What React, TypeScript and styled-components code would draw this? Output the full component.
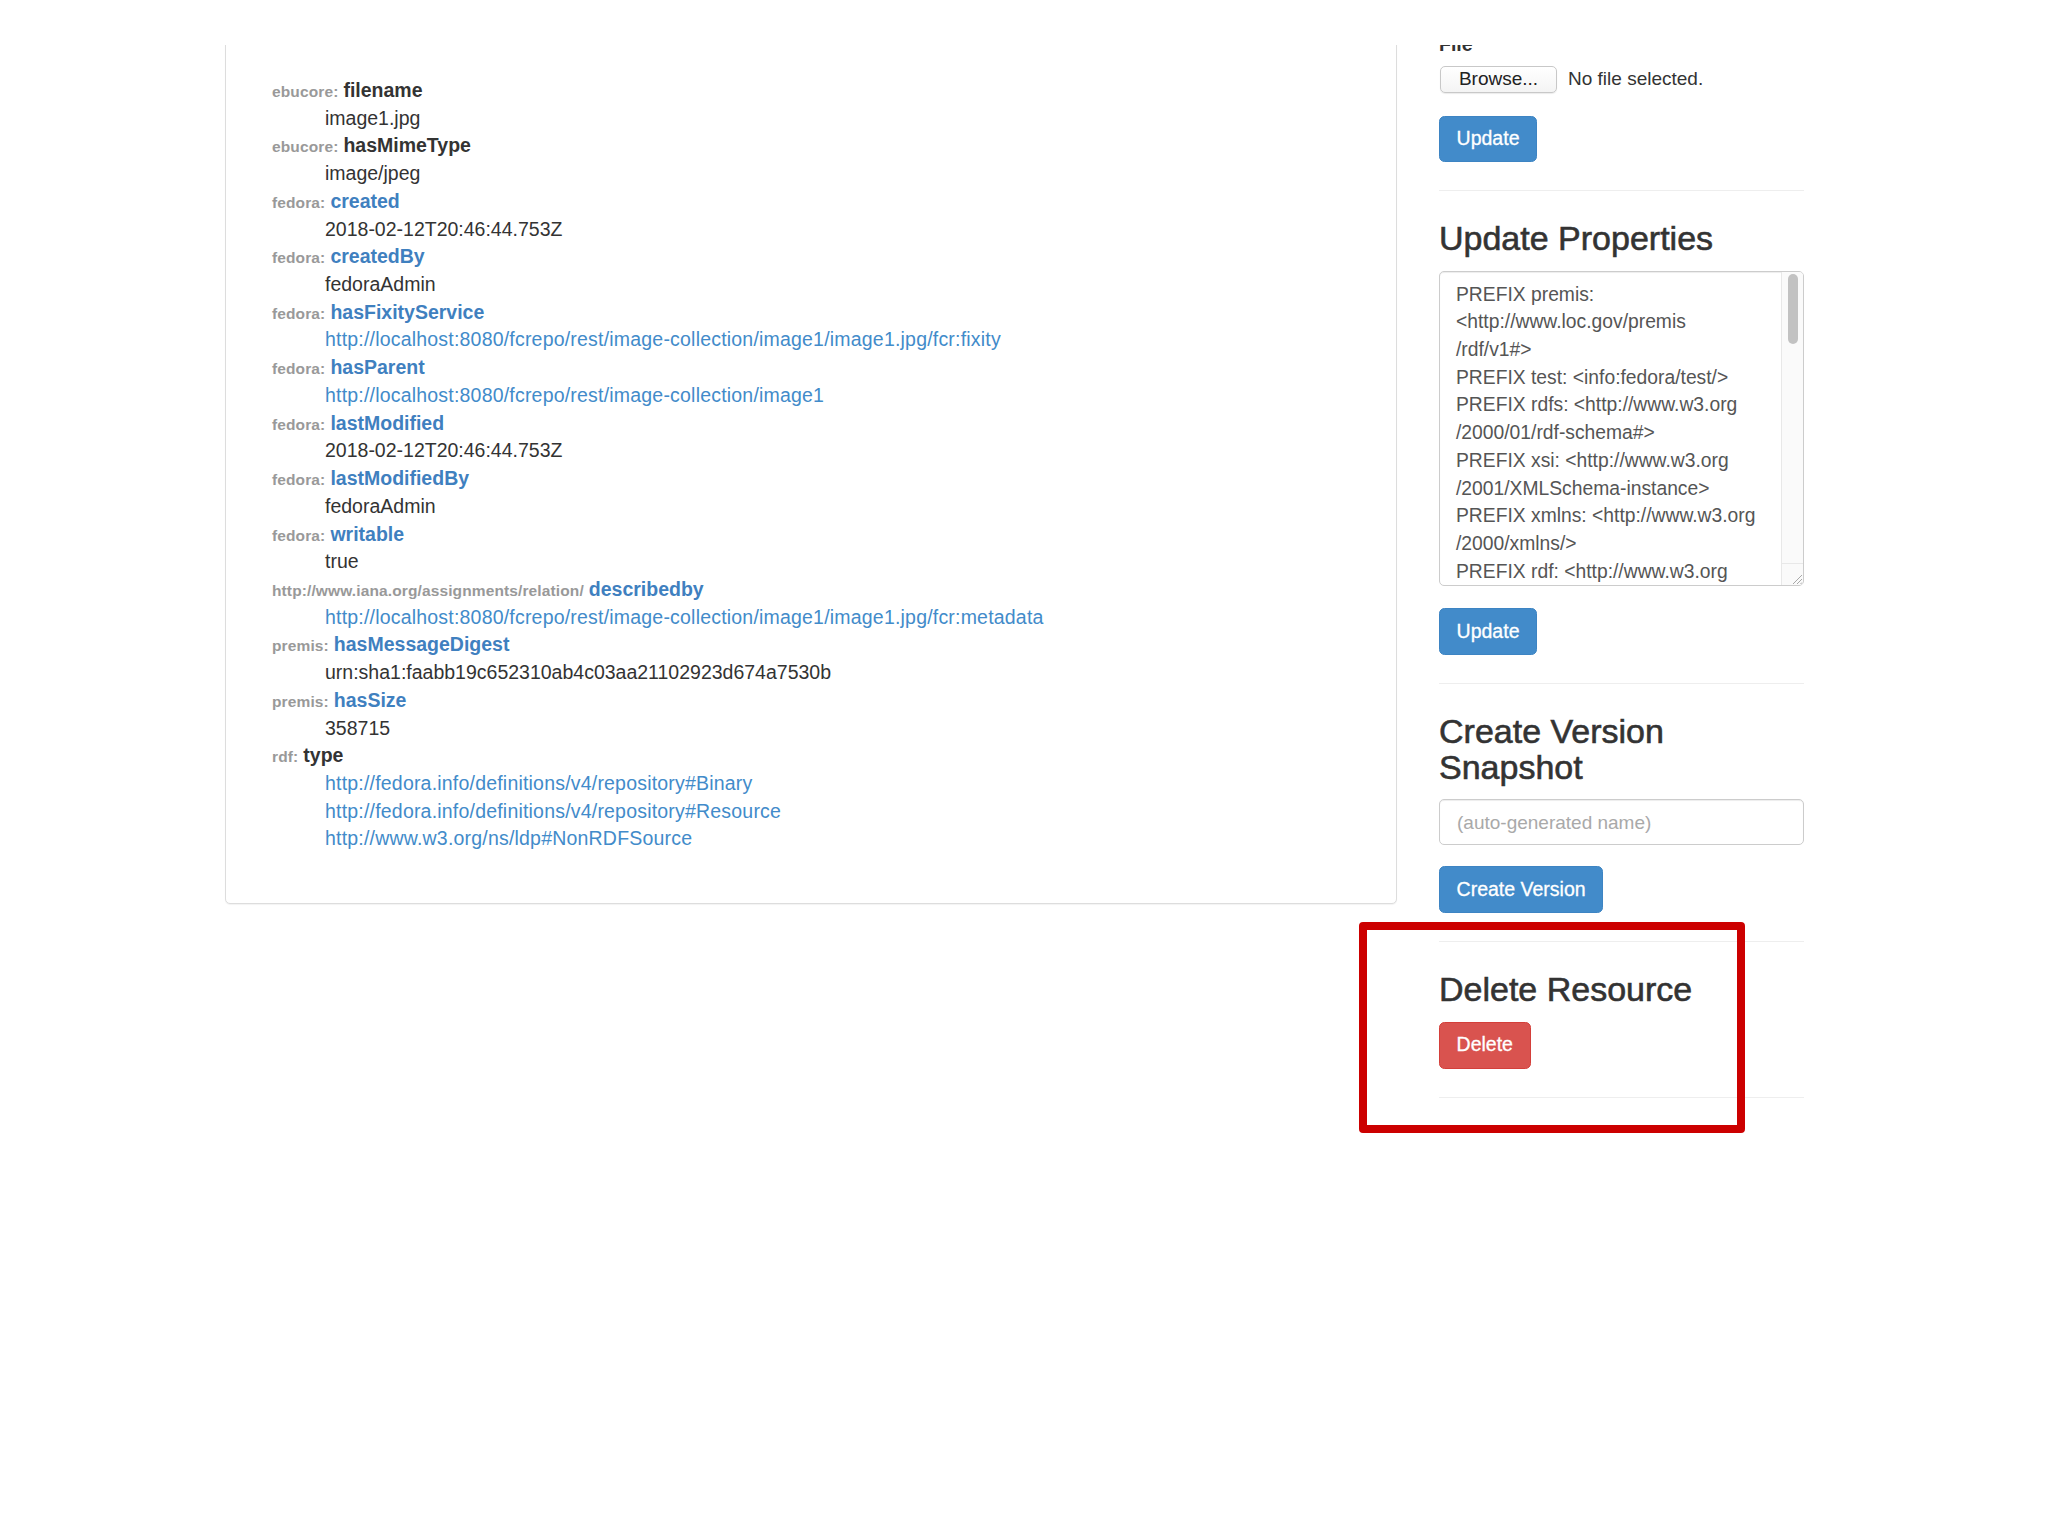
import React from 'react';
import styled, { createGlobalStyle } from 'styled-components';

const GlobalStyle = createGlobalStyle`
  html, body {
    margin: 0;
    padding: 0;
    background: #ffffff;
  }
  body {
    font-family: "Liberation Sans", Arial, Helvetica, sans-serif;
    color: #333333;
    font-size: 19.5px;
    line-height: 27.7px;
  }
`;

const Page = styled.div`
  width: 2048px;
  min-height: 1536px;
  display: flex;
  flex-direction: column;
`;

// white strip covering the top of the scrolled page
const TopBar = styled.div`
  height: 45px;
  background: #ffffff;
  position: relative;
  z-index: 2;
`;

const Main = styled.div`
  display: flex;
  align-items: flex-start;
  gap: 42px;
  padding-left: 225px;
  margin-top: -14px;
`;

const Panel = styled.div`
  width: 1172px;
  box-sizing: border-box;
  border: 1px solid #dddddd;
  border-radius: 5px;
  background: #ffffff;
  box-shadow: 0 1px 1px rgba(0, 0, 0, 0.05);
  padding: 45px 20px 50px 46px;
`;

const PropList = styled.dl`
  margin: 0;
`;

const Term = styled.dt`
  margin: 0;
  height: 27.72px;
  white-space: nowrap;
`;

const Prefix = styled.span`
  color: #999999;
  font-weight: bold;
  font-size: 15.5px;
  letter-spacing: 0.12px;
  margin-right: 5px;
`;

interface NameProps {
  $link: boolean;
}

const Name = styled.span<NameProps>`
  font-weight: bold;
  color: ${p => (p.$link ? '#3f80bf' : '#333333')};
`;

const Value = styled.dd`
  margin: 0 0 0 53px;
  height: 27.72px;
  white-space: nowrap;
`;

const Link = styled.a`
  color: #428bca;
  text-decoration: none;
  letter-spacing: 0.2px;
`;

const Side = styled.div`
  width: 365px;
  display: flex;
  flex-direction: column;
`;

const Label = styled.div`
  font-weight: bold;
  margin-bottom: 7px;
`;

const FileRow = styled.div`
  display: flex;
  align-items: center;
  gap: 11px;
  height: 27px;
  margin-bottom: 23px;
  padding-left: 1px;
`;

const BrowseButton = styled.div`
  width: 117px;
  height: 27px;
  box-sizing: border-box;
  border: 1px solid #c8c8c8;
  border-radius: 5px;
  background: linear-gradient(#ffffff, #f4f4f4);
  box-shadow: 0 1px 1px rgba(0, 0, 0, 0.08);
  display: flex;
  align-items: center;
  justify-content: center;
  font-size: 19px;
  color: #222222;
`;

const FileText = styled.span`
  font-size: 19px;
  color: #333333;
`;

interface BtnProps {
  $danger?: boolean;
}

const Button = styled.button<BtnProps>`
  align-self: flex-start;
  font-family: "Liberation Sans", Arial, Helvetica, sans-serif;
  font-size: 19.5px;
  line-height: 27.7px;
  padding: 8.5px 16.6px;
  border-radius: 5.5px;
  color: #ffffff;
  -webkit-text-stroke: 0.3px #ffffff;
  background: ${p => (p.$danger ? '#d9534f' : '#428bca')};
  border: 1px solid ${p => (p.$danger ? '#d43f3a' : '#3d84c3')};
  cursor: pointer;
`;

const Rule = styled.hr`
  margin: 28px 0 0 0;
  border: 0;
  border-top: 1px solid #eeeeee;
  width: 365px;
`;

const Heading = styled.h3`
  margin: 30px 0 14px 0;
  font-size: 34px;
  line-height: 35.75px;
  font-weight: 500;
  color: #333333;
  -webkit-text-stroke: 0.6px #333333;
`;

const TextBox = styled.div`
  height: 315px;
  box-sizing: border-box;
  border: 1px solid #cccccc;
  border-radius: 5px;
  box-shadow: inset 0 1px 1px rgba(0, 0, 0, 0.075);
  display: flex;
  overflow: hidden;
  margin-bottom: 22px;
`;

const TextContent = styled.div`
  flex: 1;
  padding: 8.5px 16px 0 16px;
  font-size: 19.3px;
  line-height: 27.7px;
  color: #555555;
  white-space: pre;
  overflow: hidden;
`;

const ScrollTrack = styled.div`
  width: 21px;
  border-left: 1px solid #e8e8e8;
  background: #fafafa;
  display: flex;
  flex-direction: column;
  align-items: center;
  padding-top: 2px;
`;

const ScrollThumb = styled.div`
  width: 10px;
  height: 70px;
  border-radius: 5px;
  background: #c2c2c2;
`;

const Resizer = styled.div`
  margin-top: auto;
  width: 21px;
  height: 21px;
  border-top: 1px solid #e8e8e8;
  display: flex;
  align-items: flex-end;
  justify-content: flex-end;
`;

const TextInput = styled.div`
  height: 46px;
  box-sizing: border-box;
  border: 1px solid #cccccc;
  border-radius: 5px;
  box-shadow: inset 0 1px 1px rgba(0, 0, 0, 0.075);
  padding: 0 17px;
  display: flex;
  align-items: center;
  color: #a9a9a9;
  font-size: 19px;
  margin-bottom: 21px;
`;

const DeleteSection = styled.div`
  position: relative;
  display: flex;
  flex-direction: column;
`;

const Callout = styled.div`
  position: absolute;
  left: -80px;
  top: 9px;
  width: 386px;
  height: 211px;
  box-sizing: border-box;
  border: 8px solid #cc0000;
  border-radius: 4px;
  pointer-events: none;
`;

type Val = { text: string; link?: boolean };
type Entry = { prefix: string; name: string; link: boolean; values: Val[] };

const base = 'http://localhost:8080/fcrepo/rest/image-collection/image1';

const entries: Entry[] = [
  { prefix: 'ebucore:', name: 'filename', link: false, values: [{ text: 'image1.jpg' }] },
  { prefix: 'ebucore:', name: 'hasMimeType', link: false, values: [{ text: 'image/jpeg' }] },
  { prefix: 'fedora:', name: 'created', link: true, values: [{ text: '2018-02-12T20:46:44.753Z' }] },
  { prefix: 'fedora:', name: 'createdBy', link: true, values: [{ text: 'fedoraAdmin' }] },
  { prefix: 'fedora:', name: 'hasFixityService', link: true, values: [{ text: base + '/image1.jpg/fcr:fixity', link: true }] },
  { prefix: 'fedora:', name: 'hasParent', link: true, values: [{ text: base, link: true }] },
  { prefix: 'fedora:', name: 'lastModified', link: true, values: [{ text: '2018-02-12T20:46:44.753Z' }] },
  { prefix: 'fedora:', name: 'lastModifiedBy', link: true, values: [{ text: 'fedoraAdmin' }] },
  { prefix: 'fedora:', name: 'writable', link: true, values: [{ text: 'true' }] },
  { prefix: 'http://www.iana.org/assignments/relation/', name: 'describedby', link: true, values: [{ text: base + '/image1.jpg/fcr:metadata', link: true }] },
  { prefix: 'premis:', name: 'hasMessageDigest', link: true, values: [{ text: 'urn:sha1:faabb19c652310ab4c03aa21102923d674a7530b' }] },
  { prefix: 'premis:', name: 'hasSize', link: true, values: [{ text: '358715' }] },
  {
    prefix: 'rdf:',
    name: 'type',
    link: false,
    values: [
      { text: 'http://fedora.info/definitions/v4/repository#Binary', link: true },
      { text: 'http://fedora.info/definitions/v4/repository#Resource', link: true },
      { text: 'http://www.w3.org/ns/ldp#NonRDFSource', link: true },
    ],
  },
];

const sparql = [
  'PREFIX premis:',
  '<http://www.loc.gov/premis',
  '/rdf/v1#>',
  'PREFIX test: <info:fedora/test/>',
  'PREFIX rdfs: <http://www.w3.org',
  '/2000/01/rdf-schema#>',
  'PREFIX xsi: <http://www.w3.org',
  '/2001/XMLSchema-instance>',
  'PREFIX xmlns: <http://www.w3.org',
  '/2000/xmlns/>',
  'PREFIX rdf: <http://www.w3.org',
].join('\n');

const App: React.FC = () => (
  <Page>
    <GlobalStyle />
    <TopBar />
    <Main>
      <Panel>
        <PropList>
          {entries.map(e => (
            <React.Fragment key={e.name}>
              <Term>
                <Prefix>{e.prefix}</Prefix>
                <Name $link={e.link}>{e.name}</Name>
              </Term>
              {e.values.map(v => (
                <Value key={v.text}>{v.link ? <Link href="#">{v.text}</Link> : v.text}</Value>
              ))}
            </React.Fragment>
          ))}
        </PropList>
      </Panel>

      <Side>
        <Label>File</Label>
        <FileRow>
          <BrowseButton>Browse...</BrowseButton>
          <FileText>No file selected.</FileText>
        </FileRow>
        <Button>Update</Button>
        <Rule />

        <Heading>Update Properties</Heading>
        <TextBox>
          <TextContent>{sparql}</TextContent>
          <ScrollTrack>
            <ScrollThumb />
            <Resizer>
              <svg width="14" height="14" viewBox="0 0 14 14">
                <path d="M13 4 L4 13 M13 8 L8 13 M13 11.5 L11.5 13" stroke="#a8a8a8" strokeWidth="1" />
              </svg>
            </Resizer>
          </ScrollTrack>
        </TextBox>
        <Button>Update</Button>
        <Rule />

        <Heading>Create Version<br />Snapshot</Heading>
        <TextInput>(auto-generated name)</TextInput>
        <Button>Create Version</Button>

        <DeleteSection>
          <Rule />
          <Heading>Delete Resource</Heading>
          <Button $danger>Delete</Button>
          <Rule />
          <Callout />
        </DeleteSection>
      </Side>
    </Main>
  </Page>
);

export default App;
